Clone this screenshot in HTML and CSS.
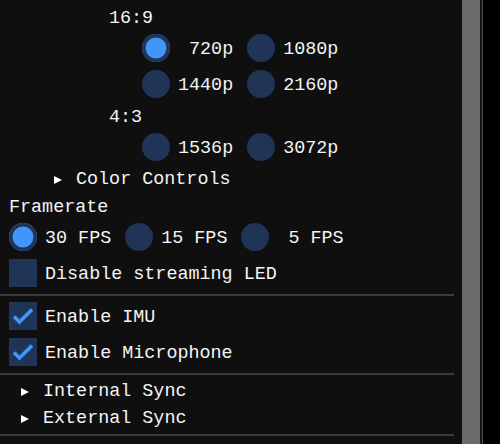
FILE: index.html
```html
<!DOCTYPE html>
<html lang="en">
<head>
  <meta charset="UTF-8">
  <meta name="viewport" content="width=device-width, initial-scale=1">
  <title>Device Configuration</title>
  <link rel="stylesheet" href="styles.css">
</head>
<body>

  <div class="window">
    <div class="content">
      <div class="text-row ratio">16:9</div>

      <div class="frame-row res">
        <span class="radio on"></span><span class="label"> 720p</span>
        <span class="radio gap"></span><span class="label">1080p</span>
      </div>
      <div class="frame-row res">
        <span class="radio"></span><span class="label">1440p</span>
        <span class="radio gap"></span><span class="label">2160p</span>
      </div>

      <div class="text-row ratio">4:3</div>

      <div class="frame-row res">
        <span class="radio"></span><span class="label">1536p</span>
        <span class="radio gap"></span><span class="label">3072p</span>
      </div>

      <div class="text-row tree nested"><span class="arrow"></span>Color Controls</div>

      <div class="text-row heading">Framerate</div>

      <div class="frame-row fps">
        <span class="radio on"></span><span class="label">30 FPS</span>
        <span class="radio gap"></span><span class="label">15 FPS</span>
        <span class="radio gap"></span><span class="label"> 5 FPS</span>
      </div>

      <div class="frame-row check">
        <span class="box"></span><span class="label">Disable streaming LED</span>
      </div>

      <div class="separator"></div>

      <div class="frame-row check">
        <span class="box">
          <svg width="28" height="28" viewBox="0 0 28 28"><polyline points="5,14.5 10.5,20 23,7.5" fill="none" stroke="#4296fa" stroke-width="3.6"/></svg>
        </span><span class="label">Enable IMU</span>
      </div>
      <div class="frame-row check">
        <span class="box">
          <svg width="28" height="28" viewBox="0 0 28 28"><polyline points="5,14.5 10.5,20 23,7.5" fill="none" stroke="#4296fa" stroke-width="3.6"/></svg>
        </span><span class="label">Enable Microphone</span>
      </div>

      <div class="separator"></div>

      <div class="text-row tree"><span class="arrow"></span>Internal Sync</div>
      <div class="text-row tree"><span class="arrow"></span>External Sync</div>

      <div class="separator"></div>

      <div class="text-row tree"><span class="arrow"></span>Device Firmware Version Info</div>
    </div>

    <div class="scrollbar">
      <div class="grab"></div>
    </div>
  </div>

</body>
</html>
```

FILE: styles.css
```css
body {
  margin: 0;
  background-color: #000;
  overflow: hidden;
  font-family: "Liberation Mono", "DejaVu Sans Mono", monospace;
  font-size: 18.4px;
  color: #f4f4f4;
}

.window {
  display: flex;
  width: 482px;
  height: 444px;
  background-color: #0f0f0f;
  border-right: 1px solid #4d4d4d;
  overflow: hidden;
}

.content {
  flex: 1;
  display: flex;
  flex-direction: column;
  gap: 8px;
  padding-top: 7px;
}

.text-row {
  height: 19px;
  line-height: 19px;
  padding-top: 2px;
  box-sizing: border-box;
  white-space: pre;
  flex-shrink: 0;
}

.frame-row {
  display: flex;
  align-items: center;
  height: 28px;
  flex-shrink: 0;
}

.ratio {
  padding-left: 109px;
}

.heading {
  padding-left: 9px;
}

.res {
  padding-left: 142px;
}

.fps, .check {
  padding-left: 9px;
}

.label {
  margin-left: 8px;
  padding-top: 2px;
  white-space: pre;
}

.radio {
  width: 28px;
  height: 28px;
  border-radius: 50%;
  background-color: #1f3456;
  flex-shrink: 0;
}

.radio.gap {
  margin-left: 14px;
}

.radio.on {
  background-color: #4296fa;
  box-shadow: inset 0 0 0 3.5px #1f3456;
}

.box {
  width: 28px;
  height: 28px;
  background-color: #1f3456;
  flex-shrink: 0;
}

.box svg {
  display: block;
}

.tree {
  display: flex;
  align-items: center;
  padding-left: 21px;
}

.tree.nested {
  padding-left: 54px;
}

.arrow {
  width: 0;
  height: 0;
  border-left: 8px solid #fff;
  border-top: 4.5px solid transparent;
  border-bottom: 4.5px solid transparent;
  margin-right: 14px;
}

.separator {
  height: 2px;
  margin: -1px 8px -2px 0;
  background-color: #3a3a3e;
  flex-shrink: 0;
}

.scrollbar {
  width: 20px;
  background-color: #161616;
}

.grab {
  width: 18px;
  height: 100%;
  background-color: #6b6b6b;
}
```
